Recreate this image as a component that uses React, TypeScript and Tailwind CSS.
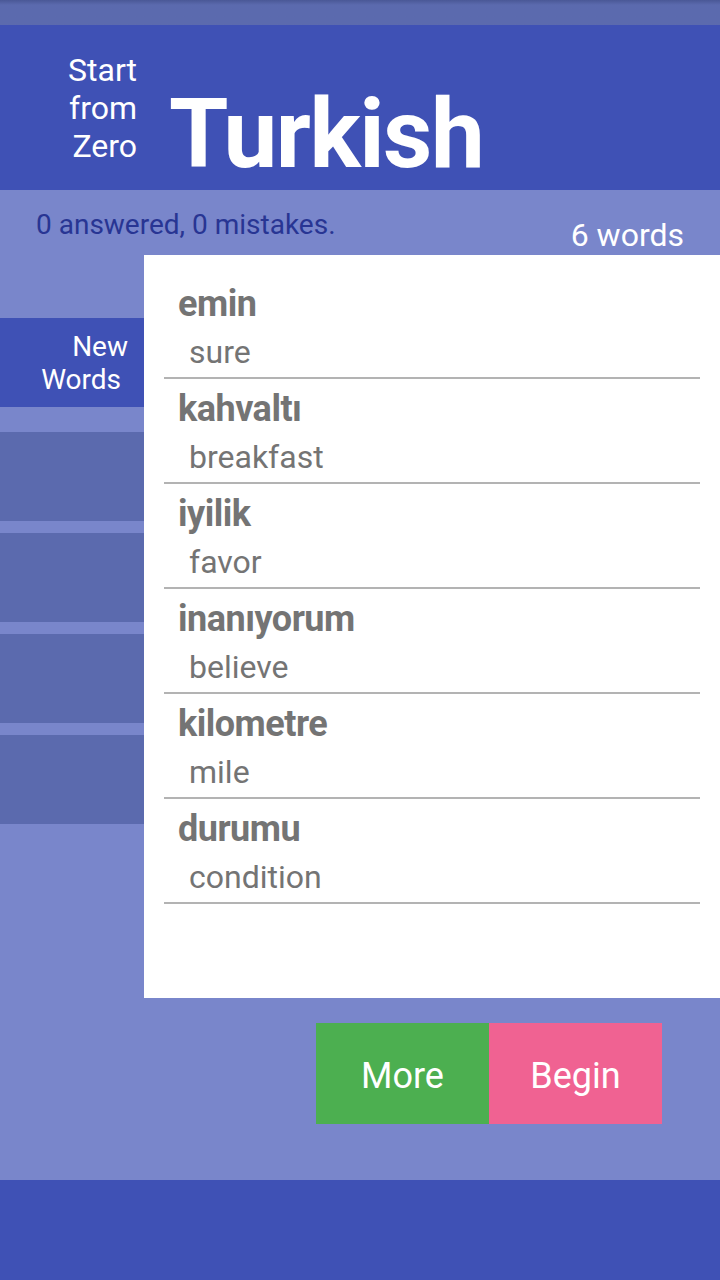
const words = [
  { word: "emin", meaning: "sure" },
  { word: "kahvaltı", meaning: "breakfast" },
  { word: "iyilik", meaning: "favor" },
  { word: "inanıyorum", meaning: "believe" },
  { word: "kilometre", meaning: "mile" },
  { word: "durumu", meaning: "condition" }
];

export default function App() {
  return (
    <div
      className="flex h-[1280px] w-[720px] flex-col overflow-hidden bg-[#7986cb]"
      style={{ fontFamily: "Roboto, 'Noto Sans', sans-serif" }}
    >
      {/* status bar */}
      <div className="h-[25px] bg-gradient-to-b from-[#4a5896] to-[#5b6aae] to-[20%]" />

      {/* title */}
      <header className="flex h-[165px] items-center bg-[#3f51b5] text-white">
        <div className="w-[137px] text-right text-[32px] leading-[38px]">
          <div>Start</div>
          <div>from</div>
          <div>Zero</div>
        </div>
        <h1 className="ml-[32px] mt-[52px] text-[96px] font-bold leading-none tracking-[-1.5px]">Turkish</h1>
      </header>

      <main className="flex flex-1 flex-col">
        <div className="flex h-[65px] justify-between">
          <p className="pl-[36px] pt-[18px] text-[28px] leading-[34px] text-[#283593]">
            0 answered, 0 mistakes.
          </p>
          <p className="pr-[36px] pt-[26px] text-[32px] leading-[38px] text-white">6 words</p>
        </div>

        <div className="flex">
          <nav className="flex w-[144px] flex-col pt-[63px]">
            <div className="flex h-[89px] flex-col items-end justify-center bg-[#3f51b5] pr-[16px] text-[28px] leading-[33px] text-white">
              <span>New</span>
              <span className="pr-[7px]">Words</span>
            </div>
            <div className="mt-[25px] flex flex-col gap-[12px]">
              <div className="h-[89px] bg-[#5b6aae]" />
              <div className="h-[89px] bg-[#5b6aae]" />
              <div className="h-[89px] bg-[#5b6aae]" />
              <div className="h-[89px] bg-[#5b6aae]" />
            </div>
          </nav>

          <section className="h-[743px] w-[576px] bg-white px-[20px] pt-[19px]">
            {words.map((w) => (
              <div key={w.word} className="border-b-2 border-[#b3b3b3] pt-[9px]">
                <div className="pl-[14px] text-[36px] font-bold leading-[42px] tracking-[-0.5px] text-[#747474]">
                  {w.word}
                </div>
                <div className="pl-[25px] pt-[3px] text-[32px] leading-[49px] text-[#747474]">{w.meaning}</div>
              </div>
            ))}
          </section>
        </div>

        <div className="flex justify-end pr-[58px] pt-[25px]">
          <button className="h-[101px] w-[173px] bg-[#4caf50] pt-[4px] text-[36px] text-white">More</button>
          <button className="h-[101px] w-[173px] bg-[#f06292] pt-[4px] text-[36px] text-white">Begin</button>
        </div>
      </main>

      <footer className="h-[100px] bg-[#3f51b5]" />
    </div>
  );
}
